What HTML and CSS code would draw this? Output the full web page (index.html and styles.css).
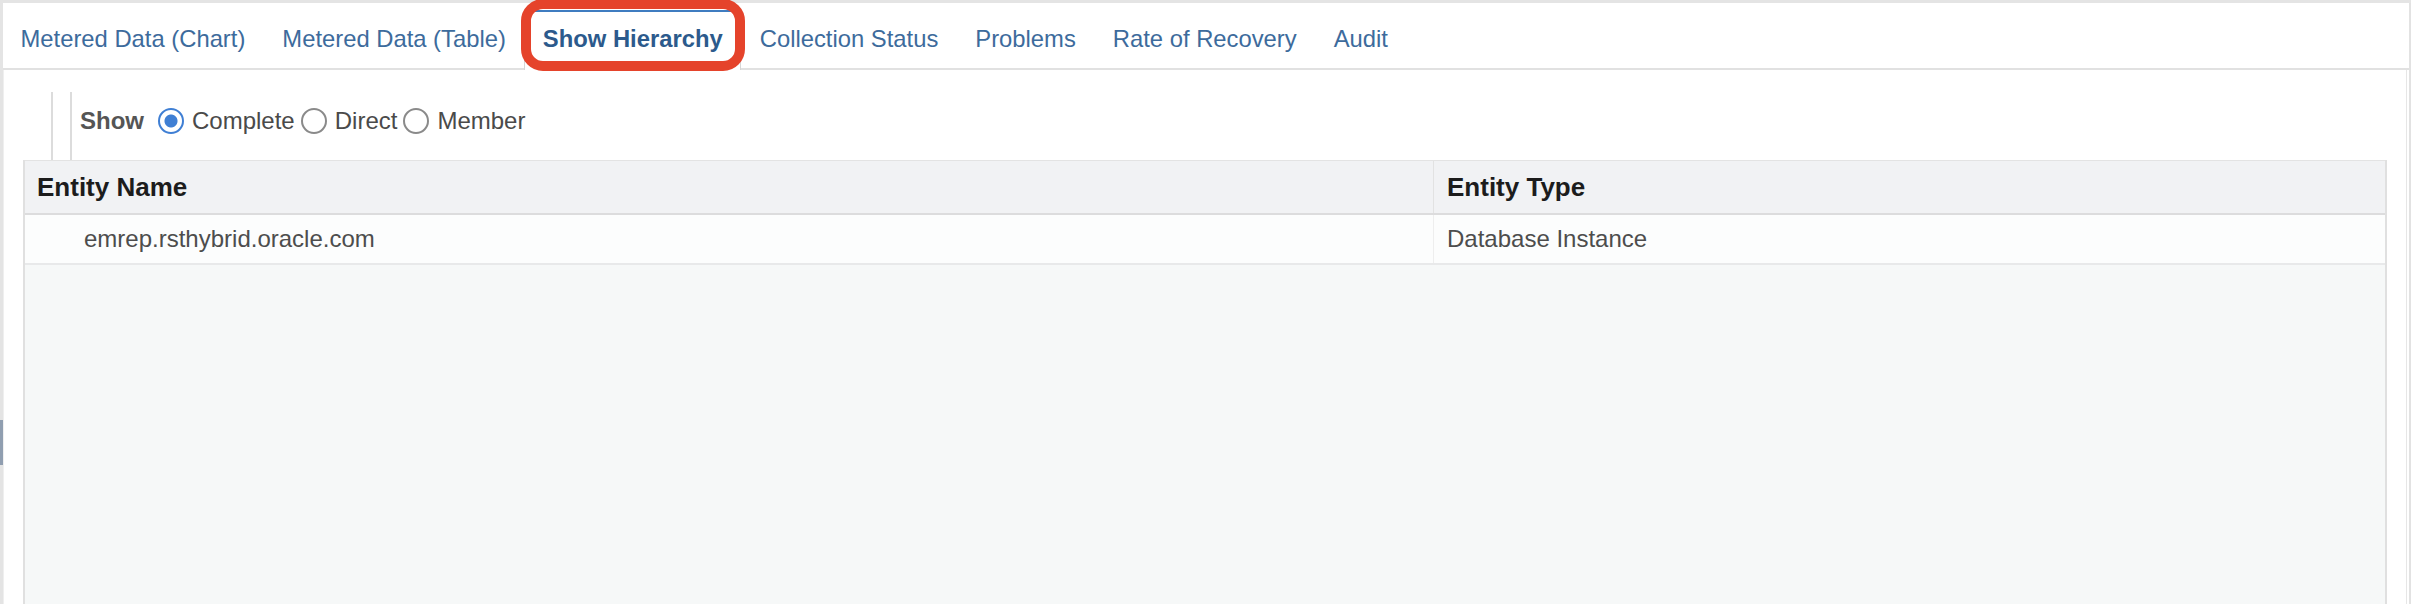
FILE: index.html
```html
<!DOCTYPE html>
<html>
<head>
<meta charset="utf-8">
<link rel="stylesheet" href="styles.css">
</head>
<body>
<div class="page">
  <div class="splitter"><div class="handle"></div></div>
  <div class="main">
    <div class="tabbar">
      <div class="tab">Metered Data (Chart)</div>
      <div class="tab">Metered Data (Table)</div>
      <div class="tab active">Show Hierarchy</div>
      <div class="tab">Collection Status</div>
      <div class="tab">Problems</div>
      <div class="tab">Rate of Recovery</div>
      <div class="tab">Audit</div>
    </div>
    <div class="panel">
      <div class="toolbar">
        <div class="sep"></div>
        <div class="sep second"></div>
        <div class="tb-items">
          <span class="show-label">Show</span>
          <span class="radio checked"></span><span class="opt">Complete</span>
          <span class="radio"></span><span class="opt">Direct</span>
          <span class="radio"></span><span class="opt">Member</span>
        </div>
      </div>
      <div class="table">
        <div class="row head">
          <div class="cell c1">Entity Name</div>
          <div class="cell c2">Entity Type</div>
        </div>
        <div class="row data">
          <div class="cell c1 indent">emrep.rsthybrid.oracle.com</div>
          <div class="cell c2">Database Instance</div>
        </div>
        <div class="empty"></div>
      </div>
    </div>
  </div>
</div>
<div class="highlight"></div>
</body>
</html>
```
FILE: styles.css
```css
html, body {
  margin: 0;
  padding: 0;
  background: #ffffff;
  font-family: "Liberation Sans", Arial, sans-serif;
}

.page {
  display: flex;
  width: 2411px;
  height: 604px;
  box-sizing: border-box;
  border-top: 3px solid #e4e4e4;
  overflow: hidden;
}

.splitter {
  width: 3px;
  flex: none;
  background: #e4e4e4;
}

.handle {
  margin-top: 417px;
  height: 45px;
  background: #909eb0;
}

.main {
  flex: 1;
  display: flex;
  flex-direction: column;
  border-right: 2px solid #e2e2e2;
  min-width: 0;
}

.tabbar {
  height: 65px;
  flex: none;
  display: flex;
  align-items: flex-end;
  border-bottom: 2px solid #e1e1e1;
  background: #ffffff;
}

.tab {
  height: 60px;
  margin-bottom: -2px;
  box-sizing: border-box;
  padding: 0 17.5px 4px;
  display: flex;
  align-items: center;
  border-left: 1px solid transparent;
  border-right: 1px solid transparent;
  border-top: 2px solid transparent;
  font-size: 23.8px;
  color: #3d6b9c;
  white-space: nowrap;
}

.tab:first-child {
  padding-left: 16.5px;
}

.tab.active {
  background: #ffffff;
  border-left-color: #d6d6d6;
  border-right-color: #d6d6d6;
  border-top-color: #3f7cc0;
  font-weight: bold;
  color: #2c5a8c;
}

.panel {
  flex: 1;
  display: flex;
  flex-direction: column;
  margin-right: 2px;
  border-left: 1px solid #efefef;
  border-right: 1px solid #e6e6e6;
  padding: 22px 19px 0 19px;
  min-height: 0;
}

.toolbar {
  height: 68px;
  flex: none;
  display: flex;
  align-items: stretch;
  padding-left: 28px;
}

.sep {
  width: 2px;
  background: #dcdcdc;
}

.sep.second {
  margin-left: 17px;
}

.tb-items {
  display: flex;
  align-items: center;
  padding-left: 8px;
  padding-bottom: 10px;
  font-size: 24px;
  color: #4a4a4a;
}

.show-label {
  font-weight: bold;
  color: #555555;
  margin-right: 14px;
}

.radio {
  width: 26px;
  height: 26px;
  box-sizing: border-box;
  border-radius: 50%;
  border: 2px solid #8a8a8a;
  background: #ffffff;
  margin-right: 8px;
  margin-left: 6px;
  flex: none;
}

.show-label + .radio {
  margin-left: 0;
}

.radio.checked {
  border: 2.5px solid #3f7fd4;
  background: radial-gradient(circle, #3f7fd4 0, #3f7fd4 6px, #ffffff 7px);
}

.table {
  flex: 1;
  display: flex;
  flex-direction: column;
  border-left: 2px solid #e0e0e0;
  border-right: 2px solid #e0e0e0;
  background: #f6f8f8;
}

.row {
  display: grid;
  grid-template-columns: 1409px 1fr;
}

.row.head {
  height: 55px;
  box-sizing: border-box;
  background: #f1f2f4;
  border-top: 1px solid #e3e3e3;
  border-bottom: 2px solid #dcdcdd;
  font-weight: bold;
  font-size: 26px;
  color: #1c1c1c;
}

.row.data {
  height: 50px;
  box-sizing: border-box;
  background: #fcfdfd;
  border-bottom: 2px solid #e8e9ea;
  font-size: 24px;
  color: #4d4d4d;
}

.cell {
  display: flex;
  align-items: center;
  white-space: nowrap;
}

.cell.c1 {
  padding-left: 12px;
  border-right: 1px solid #e2e2e2;
}

.row.data .cell.c1 {
  border-right-color: #eeeeee;
}

.cell.c2 {
  padding-left: 13px;
}

.cell.indent {
  padding-left: 59px;
}

.empty {
  flex: 1;
}

.highlight {
  position: absolute;
  left: 521px;
  top: -1px;
  width: 224px;
  height: 72px;
  box-sizing: border-box;
  border: 10px solid #e5432b;
  border-radius: 22px;
}
```
